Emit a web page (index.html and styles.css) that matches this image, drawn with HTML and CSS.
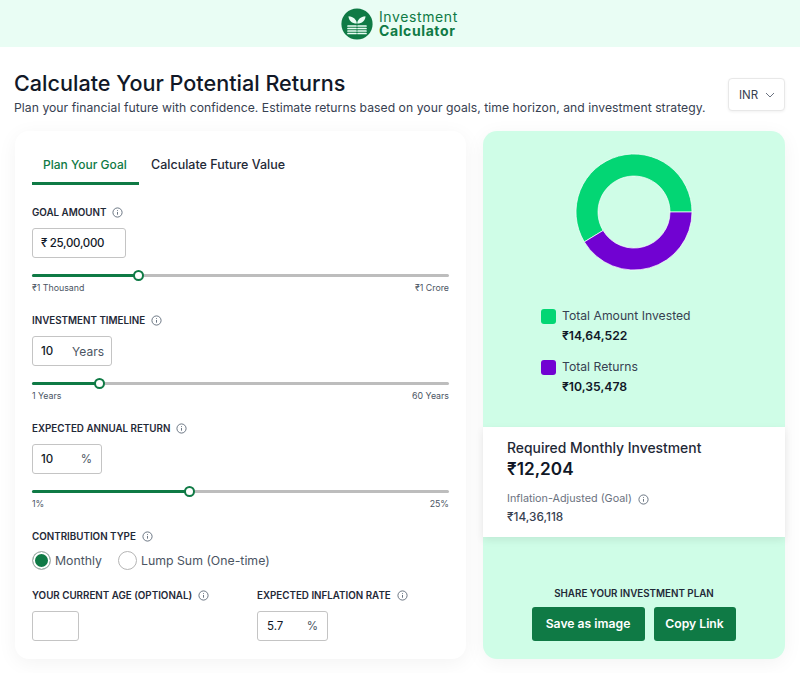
FILE: index.html
```html
<!DOCTYPE html>
<html lang="en">
<head>
    <meta charset="UTF-8">
    <meta name="viewport" content="width=device-width, initial-scale=1.0">
    <title>Investment Calculator</title>
    <link rel="stylesheet" href="styles.css">
</head>
<body>
    <svg class="icon-defs" width="0" height="0" aria-hidden="true">
        <symbol id="info" viewBox="0 0 12 12">
            <circle cx="6" cy="6" r="5" fill="none" stroke="#5f6b7a" stroke-width="1"/>
            <path d="M6 5.4v3M6 3.4v.9" fill="none" stroke="#5f6b7a" stroke-width="1"/>
        </symbol>
    </svg>

    <header class="topbar">
        <svg class="logo" viewBox="0 0 32 32" aria-hidden="true">
            <circle cx="16" cy="16" r="15.6" fill="#0f7a45"/>
            <path d="M15.800 15.500C15.600 11.500 12.500 8.800 7.500 8.200 7.800 12.800 10.800 15.500 15.800 15.500Z" fill="#e9fdf4"/>
            <path d="M16.200 15.500C16.400 11.500 19.500 8.800 24.500 8.200 24.200 12.800 21.200 15.500 16.200 15.500Z" fill="#e9fdf4"/>
            <path d="M7 18h8M7 20.500h8M7 23h8M7 25.500h8M17 18h8M17 20.500h8M17 23h8M17 25.500h8" stroke="#e9fdf4" stroke-width="1.700" stroke-linecap="round"/>
        </svg>
        <div class="brand">
            <span class="brand-top">Investment</span>
            <span class="brand-bottom">Calculator</span>
        </div>
    </header>

    <main class="page">
        <div class="page-head">
            <div>
                <h1>Calculate Your Potential Returns</h1>
                <p class="lead">Plan your financial future with confidence. Estimate returns based on your goals, time horizon, and investment strategy.</p>
            </div>
            <div class="currency">
                <span>INR</span>
                <svg width="10" height="6" viewBox="0 0 10 6" aria-hidden="true"><path d="M1 1l4 4 4-4" fill="none" stroke="#6b7280" stroke-width="1"/></svg>
            </div>
        </div>

        <div class="columns">
            <section class="card form-card">
                <div class="tabs">
                    <div class="tab active">Plan Your Goal</div>
                    <div class="tab">Calculate Future Value</div>
                </div>

                <div class="group">
                    <div class="label">Goal Amount <svg class="info"><use href="#info"/></svg></div>
                    <div class="field w-goal"><span class="tight">₹ 25,00,000</span></div>
                    <div class="slider"><div class="fill" style="width: 25.4%"><i class="thumb"></i></div></div>
                    <div class="range"><span>₹1 Thousand</span><span>₹1 Crore</span></div>
                </div>

                <div class="group">
                    <div class="label">Investment Timeline <svg class="info"><use href="#info"/></svg></div>
                    <div class="field w-years"><span>10</span><span class="unit">Years</span></div>
                    <div class="slider"><div class="fill" style="width: 16.1%"><i class="thumb"></i></div></div>
                    <div class="range"><span>1 Years</span><span>60 Years</span></div>
                </div>

                <div class="group">
                    <div class="label">Expected Annual Return <svg class="info"><use href="#info"/></svg></div>
                    <div class="field w-pct"><span>10</span><span class="unit">%</span></div>
                    <div class="slider"><div class="fill" style="width: 37.6%"><i class="thumb"></i></div></div>
                    <div class="range"><span>1%</span><span>25%</span></div>
                </div>

                <div class="group-type">
                    <div class="label">Contribution Type <svg class="info"><use href="#info"/></svg></div>
                    <div class="radios">
                        <div class="radio checked">Monthly</div>
                        <div class="radio">Lump Sum (One-time)</div>
                    </div>
                </div>

                <div class="two-col">
                    <div class="col-age">
                        <div class="label">Your Current Age (Optional) <svg class="info"><use href="#info"/></svg></div>
                        <div class="field w-age"></div>
                    </div>
                    <div>
                        <div class="label">Expected Inflation Rate <svg class="info"><use href="#info"/></svg></div>
                        <div class="field w-infl"><span class="plain">5.7</span><span class="unit">%</span></div>
                    </div>
                </div>
            </section>

            <section class="card result-card">
                <svg class="donut" width="118" height="118" viewBox="0 0 118 118" aria-hidden="true">
                    <path d="M117 59A58 58 0 1 0 9.300 88.900L28.100 77.500A36 36 0 1 1 95 59Z" fill="#03d674" stroke="#fff" stroke-width=".7"/>
                    <path d="M117 59A58 58 0 0 1 9.300 88.900L28.100 77.500A36 36 0 0 0 95 59Z" fill="#7102d2" stroke="#fff" stroke-width=".7"/>
                </svg>

                <div class="legend">
                    <div class="legend-row">
                        <i class="swatch green"></i>
                        <div>
                            <div class="legend-name">Total Amount Invested</div>
                            <div class="legend-value">₹14,64,522</div>
                        </div>
                    </div>
                    <div class="legend-row">
                        <i class="swatch purple"></i>
                        <div>
                            <div class="legend-name">Total Returns</div>
                            <div class="legend-value">₹10,35,478</div>
                        </div>
                    </div>
                </div>

                <div class="summary">
                    <div class="summary-title">Required Monthly Investment</div>
                    <div class="summary-value">₹12,204</div>
                    <div class="summary-sub">Inflation-Adjusted (Goal) <svg class="info"><use href="#info"/></svg></div>
                    <div class="summary-sub-value">₹14,36,118</div>
                </div>

                <div class="share">
                    <div class="share-title">Share Your Investment Plan</div>
                    <div class="share-buttons">
                        <button class="btn btn-save">Save as image</button>
                        <button class="btn btn-copy">Copy Link</button>
                    </div>
                </div>
            </section>
        </div>
    </main>
</body>
</html>
```

FILE: styles.css
```css
* {
    box-sizing: border-box;
}
html, body {
    height: 673px;
    overflow: hidden;
}
body {
    margin: 0;
    font-family: Inter, "Noto Sans", sans-serif;
    color: #111827;
    background: #fff;
}
.icon-defs {
    position: absolute;
}
.topbar {
    height: 47px;
    background: #e9fdf4;
    display: flex;
    justify-content: center;
    align-items: center;
    gap: 6px;
}
.logo {
    width: 32px;
    height: 32px;
}
.brand {
    display: flex;
    flex-direction: column;
    width: 80px;
    font-size: 14px;
    line-height: 14px;
    color: #0f7a45;
    letter-spacing: 0.6px;
    white-space: nowrap;
}
.brand-bottom {
    font-weight: 700;
}
.page {
    padding: 0 15px;
}
.page-head {
    height: 84px;
    display: flex;
    justify-content: space-between;
    padding-top: 23px;
}
h1 {
    margin: 0 0 0 -1px;
    font-size: 21.600px;
    line-height: 26px;
    font-weight: 500;
}
.lead {
    margin: 2px 0 0 -1px;
    font-size: 12.200px;
    line-height: 20px;
    letter-spacing: 0.035px;
    color: #374151;
    white-space: nowrap;
}
.currency {
    width: 57px;
    height: 33px;
    margin-top: 8px;
    background: #fff;
    border: 1px solid #e8e8e8;
    border-radius: 4px;
    box-shadow: 0 1px 3px rgba(0, 0, 0, 0.06);
    display: flex;
    align-items: center;
    justify-content: space-between;
    padding: 0 9px 0 10px;
    font-size: 11.500px;
    color: #374151;
}
.columns {
    display: flex;
    gap: 17px;
}
.card {
    height: 528px;
    border-radius: 14px;
    box-shadow: 0 4px 20px rgba(0, 0, 0, 0.05);
}
.form-card {
    width: 451px;
    background: #fff;
    padding: 15px 17px 0;
}
.tabs {
    display: flex;
    height: 39px;
    margin-bottom: 20px;
}
.tab {
    padding: 0 11px 0 12px;
    font-size: 12.500px;
    line-height: 38px;
    font-weight: 500;
    white-space: nowrap;
    color: #1f2937;
}
.tab.active {
    width: 107px;
    padding: 0 0 0 11px;
    font-size: 12px;
    color: #0f7a45;
    border-bottom: 3px solid #0f7a45;
}
.label {
    display: flex;
    align-items: center;
    gap: 6px;
    height: 14px;
    padding-top: 1px;
    font-size: 9.800px;
    font-weight: 600;
    text-transform: uppercase;
    white-space: nowrap;
    color: #1f2937;
}
.info {
    width: 11px;
    height: 11px;
    flex: none;
}
.group {
    height: 108px;
}
.field {
    height: 30px;
    margin-top: 9px;
    background: #fff;
    border: 1px solid #c4c4c4;
    border-radius: 3px;
    display: flex;
    align-items: center;
    justify-content: space-between;
    padding: 0 7px 0 8px;
    font-size: 11.500px;
    font-weight: 500;
    color: #111827;
}
.tight {
    letter-spacing: -0.3px;
}
.unit {
    font-weight: 400;
    color: #4b5563;
}
.plain {
    font-weight: 400;
}
.w-goal { width: 94px; }
.w-years { width: 80px; }
.w-years .unit { font-size: 12px; }
.w-pct { width: 70px; padding-right: 9px; }
.w-age { width: 47px; }
.w-infl { width: 71px; padding-left: 9px; padding-right: 9px; }
.slider {
    height: 3px;
    margin-top: 16px;
    background: #bdbdbd;
    border-radius: 2px;
}
.fill {
    position: relative;
    height: 3px;
    background: #0f7a45;
    border-radius: 2px;
}
.thumb {
    position: absolute;
    right: -6px;
    top: -4px;
    width: 11px;
    height: 11px;
    background: #fff;
    border: 2px solid #0f7a45;
    border-radius: 50%;
}
.range {
    display: flex;
    justify-content: space-between;
    margin-top: 5px;
    font-size: 8.800px;
    line-height: 11px;
    color: #4b5563;
}
.radios {
    display: flex;
    gap: 16px;
    margin-top: 8px;
    height: 18px;
}
.group-type {
    height: 59px;
}
.radio {
    display: flex;
    align-items: center;
    gap: 4px;
    font-size: 12.300px;
    color: #4b5563;
    white-space: nowrap;
}
.radio::before {
    content: "";
    width: 17px;
    height: 17px;
    flex: none;
    border: 1px solid #b5b5b5;
    border-radius: 50%;
    background: #fff;
}
.radio.checked::before {
    background: #0f7a45;
    box-shadow: inset 0 0 0 2px #fff;
}
.two-col {
    display: flex;
}
.col-age {
    width: 225px;
}
.result-card {
    width: 302px;
    background: #cffde7;
    padding-top: 22px;
    display: flex;
    flex-direction: column;
}
.donut {
    display: block;
    flex: none;
    margin: 0 auto;
}
.legend {
    height: 156px;
    padding: 37px 0 0 58px;
}
.legend-row {
    display: flex;
    gap: 6px;
    height: 51px;
}
.swatch {
    width: 15px;
    height: 15px;
    margin-top: 1px;
    border-radius: 3px;
    flex: none;
}
.swatch.green { background: #03d674; }
.swatch.purple { background: #7102d2; }
.legend-name {
    font-size: 12.200px;
    line-height: 15px;
    color: #374151;
}
.legend-value {
    margin-top: 5px;
    font-size: 12.200px;
    line-height: 15px;
    font-weight: 600;
}
.summary {
    height: 110px;
    background: #fff;
    padding: 12px 0 0 24px;
    box-shadow: 0 3px 8px rgba(0, 0, 0, 0.08);
}
.summary-title {
    font-size: 13.900px;
    line-height: 18px;
    font-weight: 500;
    color: #1f2937;
}
.summary-value {
    font-size: 17.200px;
    line-height: 24px;
    font-weight: 600;
}
.summary-sub {
    display: flex;
    align-items: center;
    gap: 6px;
    margin-top: 11px;
    font-size: 10.800px;
    line-height: 14px;
    color: #6b7280;
}
.summary-sub-value {
    margin-top: 4px;
    font-size: 11.800px;
    line-height: 15px;
    font-weight: 500;
    color: #374151;
}
.share {
    padding-top: 51px;
    text-align: center;
}
.share-title {
    font-size: 9.800px;
    line-height: 12px;
    font-weight: 600;
    text-transform: uppercase;
    color: #1f2937;
}
.share-buttons {
    display: flex;
    justify-content: center;
    gap: 9px;
    margin-top: 7px;
    padding-right: 1px;
}
.btn {
    height: 34px;
    padding-bottom: 2px;
    border: none;
    border-radius: 3px;
    background: #0f7a45;
    color: #fff;
    font-family: inherit;
    font-size: 12.200px;
    font-weight: 600;
    cursor: pointer;
}
.btn-save { width: 113px; }
.btn-copy { width: 82px; }
```
